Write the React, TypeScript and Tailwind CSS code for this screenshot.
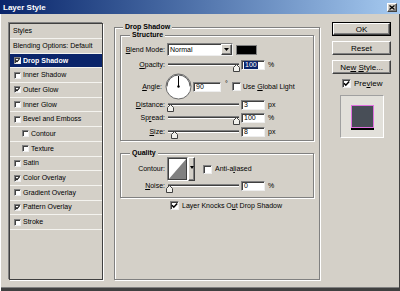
import React from "react";

const FONT = "font-['Liberation_Sans',Arial,sans-serif]";

const items: { label: string; checked: boolean; selected?: boolean; indent?: boolean }[] = [
  { label: "Drop Shadow", checked: true, selected: true },
  { label: "Inner Shadow", checked: false },
  { label: "Outer Glow", checked: true },
  { label: "Inner Glow", checked: false },
  { label: "Bevel and Emboss", checked: false },
  { label: "Contour", checked: false, indent: true },
  { label: "Texture", checked: false, indent: true },
  { label: "Satin", checked: false },
  { label: "Color Overlay", checked: true },
  { label: "Gradient Overlay", checked: false },
  { label: "Pattern Overlay", checked: true },
  { label: "Stroke", checked: false },
];

function CheckBox({ checked = false, big = false }: { checked?: boolean; big?: boolean }) {
  return (
    <span
      className={
        (big ? "w-[9px] h-[9px]" : "w-[7px] h-[7px]") +
        " relative block shrink-0 bg-white border border-t-[#808080] border-l-[#808080] border-r-[#eeeeee] border-b-[#eeeeee] shadow-[inset_1px_1px_0_#404040]"
      }
    >
      {checked && (
        <svg className="absolute inset-0 w-full h-full" viewBox="0 0 7 7">
          <path d="M1 3.2 L2.8 5.2 L6.2 1.4" stroke="#000" strokeWidth="1.5" fill="none" />
        </svg>
      )}
    </span>
  );
}

function Slider({ pos }: { pos: number }) {
  return (
    <div className="relative w-[71px] h-[10px] shrink-0">
      <div className="mt-[5px] w-full h-[3px] bg-[#404040] border-t border-t-[#808080] border-b border-b-white" />
      <svg className="absolute top-[1px]" style={{ left: pos - 3.5 }} width="7" height="8" viewBox="0 0 7 8">
        <path d="M0.5 7.5 V3.5 L3.5 0.5 L6.5 3.5 V7.5 Z" fill="#f2f1ec" stroke="#404040" strokeWidth="1" />
      </svg>
    </div>
  );
}

const fieldCls =
  "h-[10px] bg-white border border-t-[#808080] border-l-[#808080] border-r-[#eeeeee] border-b-[#eeeeee] shadow-[inset_1px_1px_0_#404040] text-[7px] leading-[8px] pl-[2px] flex items-center shrink-0 text-black";

function Label({ children }: { children: React.ReactNode }) {
  return <span className="w-[45px] shrink-0 text-right pr-[1px] text-[7px] leading-[8px]">{children}</span>;
}

function SliderRow({
  label,
  pos,
  value,
  unit,
  mt,
  selected = false,
}: {
  label: React.ReactNode;
  pos: number;
  value: string;
  unit: string;
  mt: string;
  selected?: boolean;
}) {
  return (
    <div className={"flex items-center h-[10px] " + mt}>
      <Label>{label}</Label>
      <span className="ml-[2px]">
        <Slider pos={pos} />
      </span>
      <span className={fieldCls + " w-[24px] ml-[2px]"}>
        {selected ? <span className="bg-[#0a246a] text-white px-[1px]">{value}</span> : value}
      </span>
      <span className="ml-[3px] text-[7px] leading-[8px]">{unit}</span>
    </div>
  );
}

const raised =
  "border border-t-white border-l-white border-r-[#404040] border-b-[#404040] shadow-[inset_-1px_-1px_0_#808080] bg-[#d4d0c8]";

const etched = "border border-[#808080] shadow-[inset_1px_1px_0_#ffffff,1px_1px_0_#ffffff]";

function Button({ children, primary = false }: { children: React.ReactNode; primary?: boolean }) {
  if (primary) {
    return (
      <div className="h-[14px] border border-black">
        <div className={raised + " h-full flex items-center justify-center text-[8px] leading-[9px]"}>{children}</div>
      </div>
    );
  }
  return <div className={raised + " h-[14px] flex items-center justify-center text-[8px] leading-[9px]"}>{children}</div>;
}

export default function App() {
  return (
    <div
      className={
        FONT +
        " w-[400px] h-[291px] bg-[#d4d0c8] text-black flex flex-col overflow-hidden shadow-[inset_1px_0_0_#ffffff,inset_-1px_0_0_#404040,inset_0_-3px_0_#404040,inset_0_-4px_0_#808080]"
      }
    >
      {/* Title bar */}
      <div className="h-[14px] shrink-0 flex items-center bg-linear-to-r from-[#0a246a] to-[#a6caf0]">
        <span className="pl-[3px] text-white font-bold text-[8px] leading-[9px]">Layer Style</span>
        <div className={raised + " ml-auto mr-[3px] w-[10px] h-[9px] flex items-center justify-center"}>
          <svg width="6" height="5" viewBox="0 0 6 5">
            <path d="M0.5 0.5 L5.5 4.5 M5.5 0.5 L0.5 4.5" stroke="#000" strokeWidth="1.3" />
          </svg>
        </div>
      </div>

      {/* Body */}
      <div className="flex items-start">
        {/* Styles list */}
        <div className="ml-[9px] mt-[9px] w-[94px] h-[257px] border border-[#404040] shadow-[-1px_-1px_0_#808080,1px_1px_0_#ffffff] text-[7px] leading-[8px]">
          <div className="h-[15px] flex items-center pl-[3px] border-b border-b-[#f4f3ef]">Styles</div>
          <div className="h-[14.7px] flex items-center pl-[3px] border-b border-b-[#f4f3ef]">Blending Options: Default</div>
          {items.map((it) => (
            <div
              key={it.label}
              className={
                "h-[14.7px] flex items-center gap-[2px] border-b border-b-[#f4f3ef] " +
                (it.indent ? "pl-[12px] " : "pl-[4px] ") +
                (it.selected ? "bg-[#0a246a] text-white font-bold" : "")
              }
            >
              <CheckBox checked={it.checked} />
              <span>{it.label}</span>
            </div>
          ))}
        </div>

        {/* Main group */}
        <fieldset className={etched + " ml-[11px] mt-[9px] w-[206px] h-[257px] px-[5px]"}>
          <legend className="ml-[3px] px-[2px] bg-[#d4d0c8] text-[7px] font-bold leading-[8px]">Drop Shadow</legend>

          <fieldset className={etched + " pb-[3px]"}>
            <legend className="ml-[9px] px-[2px] bg-[#d4d0c8] text-[7px] font-bold leading-[8px]">Structure</legend>

            {/* Blend mode */}
            <div className="flex items-center h-[13px] mt-[4px]">
              <Label>
                <u>B</u>lend Mode:
              </Label>
              <div className="ml-[1px] w-[66px] h-[13px] flex bg-white border border-t-[#808080] border-l-[#808080] border-r-[#eeeeee] border-b-[#eeeeee] shadow-[inset_1px_1px_0_#404040]">
                <span className="flex-1 pl-[2px] flex items-center text-[7px] leading-[8px]">Normal</span>
                <span className={raised + " w-[11px] h-full flex items-center justify-center"}>
                  <svg width="5" height="3" viewBox="0 0 5 3">
                    <path d="M0 0 H5 L2.5 3 Z" fill="#000" />
                  </svg>
                </span>
              </div>
              <span className="ml-[3px] w-[21px] h-[10px] bg-black border border-[#808080]" />
            </div>

            <SliderRow label={<><u>O</u>pacity:</>} pos={68} value="100" unit="%" mt="mt-[4px]" selected />

            {/* Angle */}
            <div className="flex items-center h-[27px] mt-[3px]">
              <Label>
                <span className="pr-[3px]">
                  <u>A</u>ngle:
                </span>
              </Label>
              <svg className="ml-[-1px] shrink-0" width="27" height="27" viewBox="0 0 27 27">
                <circle cx="13.5" cy="13.5" r="12.5" fill="#ffffff" stroke="#6a6a6a" strokeWidth="1" />
                <path d="M2 13.5 A11.5 11.5 0 0 1 25 13.5" fill="none" stroke="#303030" strokeWidth="0.8" />
                <line x1="13.5" y1="13.5" x2="13.5" y2="3" stroke="#000" strokeWidth="1" />
                <circle cx="13.5" cy="13.5" r="1.2" fill="#000" />
              </svg>
              <span className={fieldCls + " w-[28px] ml-[1px]"}>90</span>
              <span className="ml-[4px] self-start mt-[7px] text-[7px] leading-[8px]">°</span>
              <span className="ml-[4px]">
                <CheckBox big />
              </span>
              <span className="ml-[2px] text-[7px] leading-[8px]">
                Use <u>G</u>lobal Light
              </span>
            </div>

            <SliderRow label={<><u>D</u>istance:</>} pos={2} value="3" unit="px" mt="mt-0" />
            <SliderRow label={<>Sp<u>r</u>ead:</>} pos={68} value="100" unit="%" mt="mt-[3px]" />
            <SliderRow label={<><u>S</u>ize:</>} pos={6} value="8" unit="px" mt="mt-[4px]" />
          </fieldset>

          <fieldset className={etched + " mt-[8px] pb-[6px]"}>
            <legend className="ml-[9px] px-[2px] bg-[#d4d0c8] text-[7px] font-bold leading-[8px]">Quality</legend>

            <div className="flex items-center h-[24px]">
              <Label>Contour:</Label>
              <div className="ml-[1px] flex h-[24px] w-[28px]">
                <div className="w-[21px] h-full border border-t-[#808080] border-l-[#808080] border-r-white border-b-white">
                  <svg className="block w-full h-full" viewBox="0 0 19 22" preserveAspectRatio="none">
                    <rect x="0" y="0" width="19" height="22" fill="#ffffff" />
                    <path d="M0 22 L19 0 L19 22 Z" fill="#808080" />
                    <rect x="0.5" y="0.5" width="18" height="21" fill="none" stroke="#404040" strokeWidth="1" />
                  </svg>
                </div>
                <div className={raised + " w-[7px] h-full flex justify-center pt-[8px]"}>
                  <svg width="4" height="3" viewBox="0 0 4 3">
                    <path d="M0 0 H4 L2 3 Z" fill="#000" />
                  </svg>
                </div>
              </div>
              <span className="ml-[8px]">
                <CheckBox big />
              </span>
              <span className="ml-[3px] text-[7px] leading-[8px]">
                Anti-a<u>l</u>iased
              </span>
            </div>

            <SliderRow label={<><u>N</u>oise:</>} pos={1.5} value="0" unit="%" mt="mt-0" />
          </fieldset>

          <div className="mt-[3px] ml-[50px] flex items-center h-[9px]">
            <CheckBox big checked />
            <span className="ml-[3px] text-[7px] leading-[8px]">
              Layer Knocks O<u>u</u>t Drop Shadow
            </span>
          </div>
        </fieldset>

        {/* Right column */}
        <div className="ml-[12px] mt-[8px] w-[59px] flex flex-col">
          <Button primary>OK</Button>
          <div className="mt-[5px]">
            <Button>Reset</Button>
          </div>
          <div className="mt-[5px]">
            <Button>
              <span>
                Ne<u>w</u> <u>S</u>tyle...
              </span>
            </Button>
          </div>
          <div className="mt-[5px] h-[9px] flex items-center pl-[10px]">
            <CheckBox big checked />
            <span className="ml-[3px] text-[8px] leading-[9px]">
              Pre<u>v</u>iew
            </span>
          </div>
          <div className="mt-[7px] ml-[8px] w-[44px] h-[43px] bg-[#e2e0da] border border-t-[#a0a0a0] border-l-[#a0a0a0] border-r-white border-b-white flex items-center justify-center">
            <div className="w-[23px] h-[23px] bg-[#484e57] border border-[#e070e0] shadow-[0_2px_0_#000000]" />
          </div>
        </div>
      </div>
    </div>
  );
}
